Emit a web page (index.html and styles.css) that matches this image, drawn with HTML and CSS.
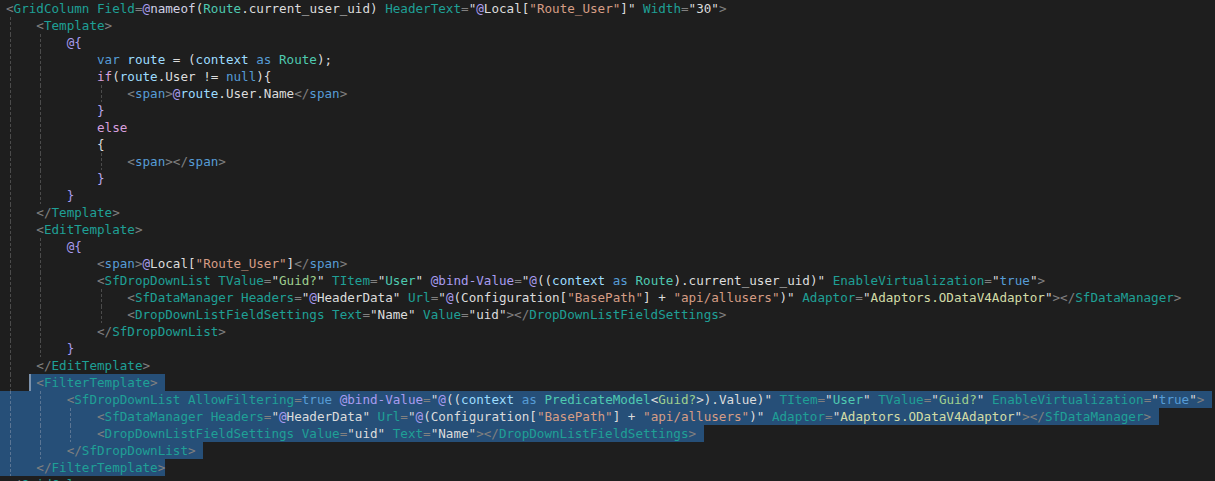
FILE: index.html
```html
<!DOCTYPE html>
<html lang="en">
<head>
    <meta charset="UTF-8">
    <title>Route.razor</title>
    <link rel="stylesheet" href="styles.css">
</head>
<body>
    <!-- editor view, one .ln per source line -->
    <div class="editor">
        <div class="ln"><span class="body"><span class="code"><span class="p">&lt;</span><span class="t">GridColumn</span> <span class="t">Field</span><span class="p">=</span><span class="r">@</span><span class="n">nameof</span>(<span class="ty">Route</span>.current_user_uid) <span class="t">HeaderText</span><span class="p">=</span>"<span class="r">@</span>Local[<span class="s">"Route_User"</span>]" <span class="t">Width</span><span class="p">=</span>"30"<span class="p">&gt;</span></span></span></div>
        <div class="ln"><span class="body"><i class="ind g"></i><span class="code"><span class="p">&lt;</span><span class="t">Template</span><span class="p">&gt;</span></span></span></div>
        <div class="ln"><span class="body"><i class="ind g"></i><i class="ind g"></i><span class="code"><span class="r">@{</span></span></span></div>
        <div class="ln"><span class="body"><i class="ind g"></i><i class="ind g"></i><i class="ind"></i><span class="code"><span class="k">var</span> <span class="v">route</span> = (<span class="v">context</span> <span class="k">as</span> <span class="ty">Route</span>);</span></span></div>
        <div class="ln"><span class="body"><i class="ind g"></i><i class="ind g"></i><i class="ind"></i><span class="code"><span class="c">if</span>(<span class="v">route</span>.User != <span class="k">null</span>){</span></span></div>
        <div class="ln"><span class="body"><i class="ind g"></i><i class="ind g"></i><i class="ind"></i><i class="ind g"></i><span class="code"><span class="p">&lt;</span><span class="h">span</span><span class="p">&gt;</span><span class="r">@</span><span class="v">route</span>.User.Name<span class="p">&lt;/</span><span class="h">span</span><span class="p">&gt;</span></span></span></div>
        <div class="ln"><span class="body"><i class="ind g"></i><i class="ind g"></i><i class="ind"></i><span class="code"><span class="b">}</span></span></span></div>
        <div class="ln"><span class="body"><i class="ind g"></i><i class="ind g"></i><i class="ind"></i><span class="code"><span class="c">else</span></span></span></div>
        <div class="ln"><span class="body"><i class="ind g"></i><i class="ind g"></i><i class="ind"></i><span class="code">{</span></span></div>
        <div class="ln"><span class="body"><i class="ind g"></i><i class="ind g"></i><i class="ind"></i><i class="ind g"></i><span class="code"><span class="p">&lt;</span><span class="h">span</span><span class="p">&gt;&lt;/</span><span class="h">span</span><span class="p">&gt;</span></span></span></div>
        <div class="ln"><span class="body"><i class="ind g"></i><i class="ind g"></i><i class="ind"></i><span class="code"><span class="b">}</span></span></span></div>
        <div class="ln"><span class="body"><i class="ind g"></i><i class="ind g"></i><span class="code"><span class="r">}</span></span></span></div>
        <div class="ln"><span class="body"><i class="ind g"></i><span class="code"><span class="p">&lt;/</span><span class="t">Template</span><span class="p">&gt;</span></span></span></div>
        <div class="ln"><span class="body"><i class="ind g"></i><span class="code"><span class="p">&lt;</span><span class="t">EditTemplate</span><span class="p">&gt;</span></span></span></div>
        <div class="ln"><span class="body"><i class="ind g"></i><i class="ind g"></i><span class="code"><span class="r">@{</span></span></span></div>
        <div class="ln"><span class="body"><i class="ind g"></i><i class="ind g"></i><i class="ind"></i><span class="code"><span class="p">&lt;</span><span class="h">span</span><span class="p">&gt;</span><span class="r">@</span>Local[<span class="s">"Route_User"</span>]<span class="p">&lt;/</span><span class="h">span</span><span class="p">&gt;</span></span></span></div>
        <div class="ln"><span class="body"><i class="ind g"></i><i class="ind g"></i><i class="ind"></i><span class="code"><span class="p">&lt;</span><span class="t">SfDropDownList</span> <span class="t">TValue</span><span class="p">=</span>"<span class="gv">Guid?</span>" <span class="t">TItem</span><span class="p">=</span>"<span class="ty">User</span>" <span class="r">@bind-Value</span><span class="p">=</span>"<span class="r">@</span>((<span class="v">context</span> <span class="k">as</span> <span class="ty">Route</span>).current_user_uid)" <span class="t">EnableVirtualization</span><span class="p">=</span>"<span class="k">true</span>"<span class="p">&gt;</span></span></span></div>
        <div class="ln"><span class="body"><i class="ind g"></i><i class="ind g"></i><i class="ind"></i><i class="ind g"></i><span class="code"><span class="p">&lt;</span><span class="t">SfDataManager</span> <span class="t">Headers</span><span class="p">=</span>"<span class="r">@</span>HeaderData" <span class="t">Url</span><span class="p">=</span>"<span class="r">@</span>(Configuration[<span class="s">"BasePath"</span>] + <span class="s">"api/allusers"</span>)" <span class="t">Adaptor</span><span class="p">=</span>"<span class="av">Adaptors.ODataV4Adaptor</span>"<span class="p">&gt;&lt;/</span><span class="t">SfDataManager</span><span class="p">&gt;</span></span></span></div>
        <div class="ln"><span class="body"><i class="ind g"></i><i class="ind g"></i><i class="ind"></i><i class="ind g"></i><span class="code"><span class="p">&lt;</span><span class="t">DropDownListFieldSettings</span> <span class="t">Text</span><span class="p">=</span>"Name" <span class="t">Value</span><span class="p">=</span>"uid"<span class="p">&gt;&lt;/</span><span class="t">DropDownListFieldSettings</span><span class="p">&gt;</span></span></span></div>
        <div class="ln"><span class="body"><i class="ind g"></i><i class="ind g"></i><i class="ind"></i><span class="code"><span class="p">&lt;/</span><span class="t">SfDropDownList</span><span class="p">&gt;</span></span></span></div>
        <div class="ln"><span class="body"><i class="ind g"></i><i class="ind g"></i><span class="code"><span class="r">}</span></span></span></div>
        <div class="ln"><span class="body"><i class="ind g"></i><span class="code"><span class="p">&lt;/</span><span class="t">EditTemplate</span><span class="p">&gt;</span></span></span></div>
        <!-- selection starts mid-indent on this line -->
        <div class="ln"><span class="body"><i class="ind g short"></i><span class="code selpart"> <span class="p">&lt;</span><span class="t">FilterTemplate</span><span class="p">&gt;</span></span></span></div>
        <div class="ln sel"><span class="body"><i class="ind g"></i><i class="ind g"></i><span class="code"><span class="p">&lt;</span><span class="t">SfDropDownList</span> <span class="t">AllowFiltering</span><span class="p">=</span><span class="k">true</span> <span class="r">@bind-Value</span><span class="p">=</span>"<span class="r">@</span>((<span class="v">context</span> <span class="k">as</span> <span class="ty">PredicateModel</span>&lt;<span class="gv">Guid?</span>&gt;).Value)" <span class="t">TItem</span><span class="p">=</span>"<span class="ty">User</span>" <span class="t">TValue</span><span class="p">=</span>"<span class="gv">Guid?</span>" <span class="t">EnableVirtualization</span><span class="p">=</span>"<span class="k">true</span>"<span class="p">&gt;</span></span></span></div>
        <div class="ln sel"><span class="body"><i class="ind g"></i><i class="ind g"></i><i class="ind g"></i><span class="code"><span class="p">&lt;</span><span class="t">SfDataManager</span> <span class="t">Headers</span><span class="p">=</span>"<span class="r">@</span>HeaderData" <span class="t">Url</span><span class="p">=</span>"<span class="r">@</span>(Configuration[<span class="s">"BasePath"</span>] + <span class="s">"api/allusers"</span>)" <span class="t">Adaptor</span><span class="p">=</span>"<span class="av">Adaptors.ODataV4Adaptor</span>"<span class="p">&gt;&lt;/</span><span class="t">SfDataManager</span><span class="p">&gt;</span></span></span></div>
        <div class="ln sel"><span class="body"><i class="ind g"></i><i class="ind g"></i><i class="ind g"></i><span class="code"><span class="p">&lt;</span><span class="t">DropDownListFieldSettings</span> <span class="t">Value</span><span class="p">=</span>"uid" <span class="t">Text</span><span class="p">=</span>"Name"<span class="p">&gt;&lt;/</span><span class="t">DropDownListFieldSettings</span><span class="p">&gt;</span></span></span></div>
        <div class="ln sel"><span class="body"><i class="ind g"></i><i class="ind g"></i><span class="code"><span class="p">&lt;/</span><span class="t">SfDropDownList</span><span class="p">&gt;</span></span></span></div>
        <div class="ln sel last"><span class="body"><i class="ind g"></i><span class="code"><span class="p">&lt;/</span><span class="t">FilterTemplate</span><span class="p">&gt;</span></span></span></div>
        <div class="ln"><span class="body"><span class="code"><span class="p">&lt;/</span><span class="t">GridColumn</span><span class="p">&gt;</span></span></span></div>
    </div>
</body>
</html>
```

FILE: styles.css
```css
body{
    margin: 0;
    background-color: #1e1e1e;
    overflow: hidden;
}
.editor{
    width: 1215px;
    height: 481px;
    overflow: hidden;
    font-family: "DejaVu Sans Mono", "Liberation Mono", monospace;
    font-size: 12.6px;
    line-height: 17px;
    color: #dcdcdc;
}
.ln{
    display: flex;
    height: 17px;
}
.body{
    display: flex;
    padding-left: 6px;
}
.code{
    white-space: pre;
}
/* one indent level = 4 columns, .g draws the dashed guide */
.ind{
    width: 4ch;
    flex: none;
}
.ind.short{
    width: 3ch;
}
.ind.g{
    background: linear-gradient(#4b4b4b 60%, transparent 60%) 3.6px 0 / 1px 5px repeat-y;
}
.sel .ind.g{
    background-image: linear-gradient(#5a7594 60%, transparent 60%);
}
/* selection */
.sel .body{
    background-color: #264f78;
    padding-right: 1ch;
}
.sel.last .body{
    padding-right: 0;
}
.selpart{
    background-color: #264f78;
    padding-right: 1ch;
    box-shadow: inset 2px 0 0 #7d93ad;
}

/* syntax colours */
.p{ color: #808080; }
.t{ color: #1fa096; }
.h{ color: #569cd6; }
.k{ color: #569cd6; }
.c{ color: #d8a0df; }
.ty{ color: #4ec9b0; }
.v{ color: #9cdcfe; }
.r{ color: #a99cf0; }
.b{ color: #b9a8f0; }
.n{ color: #d0d0e4; }
.s{ color: #d69d85; }
.gv{ color: #9fcf8f; }
.av{ color: #d2dca6; }
```
